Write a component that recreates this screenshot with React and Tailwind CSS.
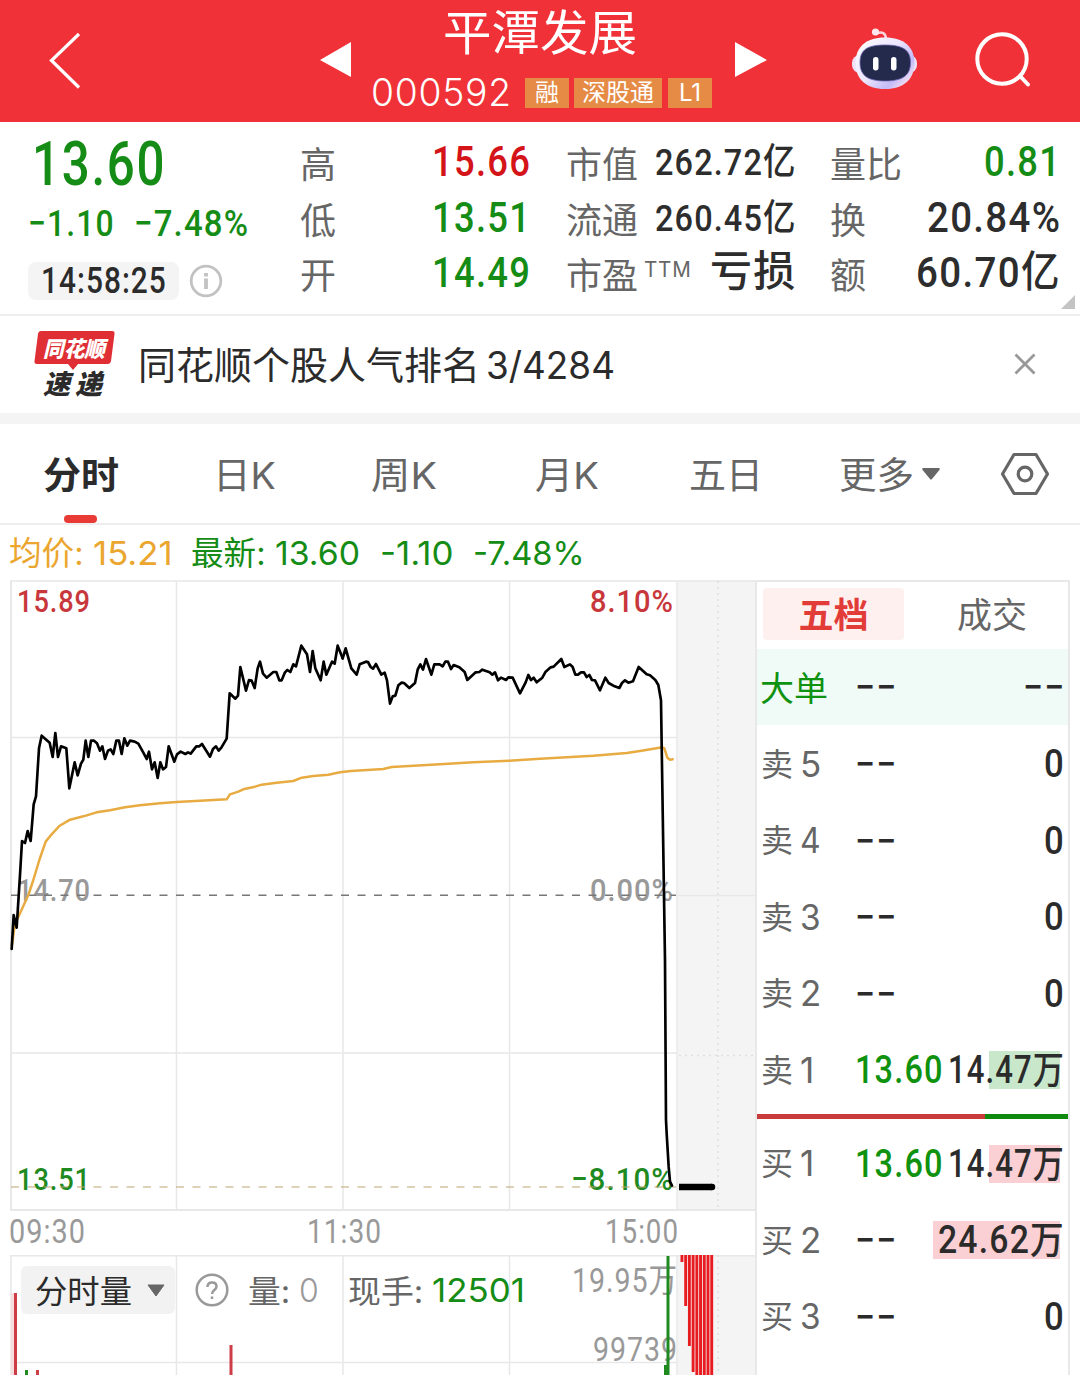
import { useLayoutEffect, useRef } from 'react';

// squeezes or stretches a text to the width of its box
const Fit = ({ className = '', children }) => {
  const box = useRef(null);
  const inner = useRef(null);

  useLayoutEffect(() => {
    const scale = box.current.clientWidth / inner.current.offsetWidth;
    inner.current.style.transform = `scaleX(${scale})`;
  }, [children]);

  return (
    <span ref={box} className={`block shrink-0 whitespace-nowrap ${className}`}>
      <span ref={inner} className="inline-block origin-left">{children}</span>
    </span>
  );
};

const NUM = "font-['Roboto','Noto_Sans_CJK_SC',sans-serif] font-medium tracking-[0.035em]";

const priceMorning =
  '35,1122 41,1020 50,1058 60,900 66,798 75,804 83,768 92,798 101,688 108,664 117,520 125,482 149,503 158,546 166,474 174,546 183,514 199,520 208,640 224,562 233,601 243,566 250,554 257,497 265,546 273,497 282,497 291,505 300,527 307,514 315,552 324,527 332,523 340,537 349,497 357,497 365,537 373,490 382,512 390,497 404,500 415,506 430,533 440,552 447,530 456,583 464,562 473,609 481,562 489,583 498,576 506,514 523,560 531,538 542,530 556,537 564,532 572,536 589,514 598,514 606,507 630,545 639,522 648,514 656,527 664,518 680,491 689,355 706,371 714,362 721,276 738,347 747,315 755,317 764,339 773,280 780,260 789,296 800,308 820,291 829,291 838,316 845,316 855,292 862,285 871,291 880,268 888,274 904,212 921,238 930,291 938,228 946,280 962,316 971,260 979,299 996,260 1004,266 1013,212 1028,250';
const priceAfternoon =
  '8,250 17,220 34,280 50,299 59,268 78,260 84,261 92,276 99,281 108,267 124,299 134,293 141,316 150,386 158,364 166,362 175,331 185,323 192,324 208,339 225,324 233,284 241,268 249,284 258,252 274,299 283,268 299,268 308,274 316,260 324,260 333,282 341,270 358,277 374,291 382,315 407,292 418,291 427,284 449,292 457,299 465,292 474,316 483,308 498,315 505,307 518,308 540,355 557,322 565,300 573,315 581,308 590,322 607,308 617,290 632,277 641,275 664,252 673,276 690,268 698,276 706,299 714,299 723,292 732,292 740,306 748,300 756,315 765,316 780,346 796,308 806,324 820,332 838,339 846,324 855,316 865,323 879,319 896,276 920,298 930,301 946,315 955,330 963,376 975,1155 978,1635 980,1675 986,1775 990,1820 996,1832';
const average =
  '36,1110 45,1045 60,1015 85,960 100,915 118,855 137,800 155,778 178,753 210,734 250,724 290,712 330,706 375,697 420,691 480,685 530,681 600,677 680,673 690,658 715,650 730,643 765,635 785,629 830,623 880,618 905,608 940,603 985,599 1020,592 1053,588 1150,582 1175,576 1320,568 1420,562 1528,557 1620,551 1780,542 1880,534 1920,528 1987,517 1993,520 2002,548 2010,554 2018,553';

const Header = () => (
  <header className="flex h-[122px] items-start bg-[#f03137] text-white">
    <svg className="h-[122px] w-[320px]" viewBox="0 0 320 122" fill="none" stroke="#fff" strokeWidth="3.2">
      <path d="M79 34 51.5 60.5 79 87.5" />
    </svg>
    <svg className="h-[122px] w-[32px]" viewBox="320 0 32 122" fill="#fff">
      <path d="M320 60 351 42V77Z" />
    </svg>
    <div className="w-[383px]">
      <div className="ml-[91px] flex h-[62px] pt-[2px]">
        <Fit className="w-[194px] text-[48px] leading-[62px]">平潭发展</Fit>
      </div>
      <div className="ml-[19px] flex h-[60px] pt-[8px]">
        <Fit className="w-[141px] text-[38px] leading-[44px] font-light tracking-[0.02em]">000592</Fit>
        <div className="ml-[13px] mt-[8px] flex h-[30px] text-[24px] leading-[30px]">
          <span className="w-[44px] bg-[#e58b46] text-center">融</span>
          <span className="ml-[5px] w-[88px] bg-[#e58b46] text-center">深股通</span>
          <span className="ml-[6px] w-[44px] bg-[#e58b46] text-center">L1</span>
        </div>
      </div>
    </div>
    <svg className="h-[122px] w-[33px]" viewBox="735 0 33 122" fill="#fff">
      <path d="M735 42 767 60 735 77Z" />
    </svg>
    <svg className="ml-[80px] h-[122px] w-[72px]" viewBox="848 0 72 122">
      <defs>
        <linearGradient id="shell" x1="0" y1="0" x2="1" y2="0.8">
          <stop offset="0" stopColor="#fff" />
          <stop offset="0.5" stopColor="#ece6ff" />
          <stop offset="0.8" stopColor="#c3bbf7" />
          <stop offset="1" stopColor="#fbe6f2" />
        </linearGradient>
      </defs>
      <path d="M877 33Q885.500 30.500 886 39" fill="none" stroke="#fbd5de" strokeWidth="2.600" />
      <circle cx="875.500" cy="32" r="3.600" fill="#ffe9ee" />
      <rect x="852" y="55" width="65" height="18" rx="8" fill="#eee2f8" />
      <path d="M885 37.500C904 37.500 914.500 47 914.500 63S904 89 885 89 855.500 79 855.500 63 866 37.500 885 37.500Z" fill="url(#shell)" />
      <path d="M885 45C903 45 910.500 50 910.500 62.500S903 81 885 81 860 75 860 62.500 867 45 885 45Z" fill="#232a4c" stroke="#6c66b0" strokeWidth="0.8" />
      <rect x="873" y="57" width="5.500" height="13.500" rx="2.700" fill="#fff" />
      <rect x="891" y="57" width="5.500" height="13.500" rx="2.700" fill="#fff" />
    </svg>
    <svg className="ml-[50px] h-[122px] w-[70px]" viewBox="970 0 70 122" fill="none" stroke="#fff" strokeWidth="4" strokeLinecap="round">
      <circle cx="1002" cy="59" r="24.700" />
      <path d="M1020 76 1028 84.500" />
    </svg>
  </header>
);

const Quote = () => (
  <section className="relative flex h-[194px] border-b-2 border-[#eee] text-[36px] text-[#666]">
    <div className="w-[301px] pl-[28px] text-[#158c15]">
      <Fit className={`ml-[4px] mt-[8px] h-[68px] w-[134px] text-[61px] leading-[68px] ${NUM}`}>13.60</Fit>
      <div className={`flex h-[50px] text-[37px] leading-[52px] ${NUM}`}>
        <Fit className="w-[87px]">−1.10</Fit>
        <Fit className="ml-[19px] w-[115px]">−7.48%</Fit>
      </div>
      <div className="mt-[14px] flex items-center">
        <span className="flex h-[38px] w-[151px] justify-center rounded-lg bg-[#f4f4f4] text-[#2b2b2b]">
          <Fit className={`w-[126px] text-[36px] leading-[38px] ${NUM}`}>14:58:25</Fit>
        </span>
        <svg className="ml-[10px] size-[34px]" viewBox="0 0 34 34" fill="none" stroke="#c2c2c2" strokeWidth="2.800">
          <circle cx="17" cy="17" r="14.800" />
          <path d="M17 14.500V25M17 9V12.500" strokeWidth="3.800" />
        </svg>
      </div>
    </div>
    <div className="mt-[16px] w-[34px] -ml-px leading-[55.500px]">
      <p>高</p>
      <p>低</p>
      <p>开</p>
    </div>
    <div className={`mt-[12px] ml-[98px] w-[99px] text-[43px] leading-[55.500px] text-[#158c15] ${NUM}`}>
      <Fit className="w-[99px] text-[#d41418]">15.66</Fit>
      <Fit className="w-[99px]">13.51</Fit>
      <Fit className="w-[99px]">14.49</Fit>
    </div>
    <div className="mt-[16px] ml-[35px] w-[88px] leading-[55.500px]">
      <p>市值</p>
      <p>流通</p>
      <p className="flex whitespace-nowrap">
        市盈
        <Fit className="ml-[6px] -mt-[7px] w-[48px] text-[21px] tracking-[0.04em]">TTM</Fit>
      </p>
    </div>
    <div className={`mt-[13px] flex w-[143px] flex-col items-end text-[37px] leading-[55.500px] text-[#2d2d2d] ${NUM}`}>
      <Fit className="w-[142px]">262.72亿</Fit>
      <Fit className="w-[142px]">260.45亿</Fit>
      <Fit className="-mt-[2px] w-[87px] text-[42px]">亏损</Fit>
    </div>
    <div className="mt-[16px] ml-[33px] w-[72px] leading-[55.500px]">
      <p>量比</p>
      <p>换</p>
      <p>额</p>
    </div>
    <div className={`mt-[12px] flex w-[159px] flex-col items-end text-[43px] leading-[55.500px] text-[#2d2d2d] ${NUM}`}>
      <Fit className="w-[77px] text-[#158c15]">0.81</Fit>
      <Fit className="w-[134px]">20.84%</Fit>
      <Fit className="w-[145px]">60.70亿</Fit>
    </div>
    <svg className="absolute right-[5px] bottom-[5px] size-[14px]" viewBox="0 0 14 14" fill="#c4c4c4">
      <path d="M14 0V14H0Z" />
    </svg>
  </section>
);

const News = () => (
  <section className="flex h-[108px] items-center border-b-[11px] border-[#f4f4f4] text-[#2b2b2b]">
    <div className="relative ml-[34px] h-[68px] w-[81px]">
      <svg className="absolute inset-0" width="81" height="68" viewBox="0 0 81 68" fill="#df2f35">
        <path d="M7 0H78Q81 0 80.500 3L77 30Q76.500 33 73.500 33H44L39 39 34 33H3Q0 33 .5 30L4 3Q4.500 0 7 0Z" />
      </svg>
      <div className="relative pl-[9px] font-black italic">
        <Fit className="h-[37px] w-[62px] text-[22px] leading-[36px] text-white">同花顺</Fit>
        <div className="flex h-[31px] gap-[5px] text-[27px] leading-[34px]">
          <Fit className="w-[27px]">速</Fit>
          <Fit className="w-[27px]">递</Fit>
        </div>
      </div>
    </div>
    <Fit className="ml-[23px] w-[342px] text-[38px] leading-[50px]">同花顺个股人气排名</Fit>
    <Fit className="ml-[6px] w-[129px] text-[38px] leading-[50px]">3/4284</Fit>
    <svg className="ml-[399px] -mt-[2px] size-[22px]" viewBox="0 0 22 22" stroke="#999" strokeWidth="2.800">
      <path d="M1.500 1.500 20.500 20.500M20.500 1.500 1.500 20.500" />
    </svg>
  </section>
);

const Tabs = () => (
  <nav className="flex h-[101px] border-b-2 border-[#eee] text-[37px] leading-[103px] text-[#666]">
    <div className="relative ml-[43px] w-[76px] font-bold text-[#2b2b2b]">
      <Fit className="w-[76px]">分时</Fit>
      <span className="absolute bottom-0 left-[21px] h-[8px] w-[33px] rounded-full bg-[#e93b35]" />
    </div>
    <Fit className="ml-[94px] w-[63px]">日K</Fit>
    <Fit className="ml-[95px] w-[66px]">周K</Fit>
    <Fit className="ml-[98px] w-[64px]">月K</Fit>
    <Fit className="ml-[90px] w-[74px]">五日</Fit>
    <Fit className="ml-[76px] w-[75px]">更多</Fit>
    <svg className="ml-[8px] h-[100px] w-[18px]" viewBox="0 0 18 100" fill="#666">
      <path d="M1 44H17Q18.500 44.500 17 46.500L10 55Q9 56 8 55L1 46.500Q-.5 44.500 1 44Z" />
    </svg>
    <svg className="ml-[60px] h-[100px] w-[50px]" viewBox="0 0 50 100" fill="none" stroke="#666" strokeWidth="3.200" strokeLinejoin="round">
      <path d="M14 30.500H36L47.500 50 36 69.500H14L2.500 50Z" />
      <circle cx="25" cy="50" r="6.800" />
    </svg>
  </nav>
);

const Legend = () => (
  <div className="flex h-[55px] pt-[1px] text-[33px] leading-[54px] text-[#158c15]">
    <Fit className="ml-[9px] w-[75px] text-[#eaa62e]">均价:</Fit>
    <Fit className="ml-[9px] w-[80px] text-[#eaa62e]">15.21</Fit>
    <Fit className="ml-[18px] w-[75px]">最新:</Fit>
    <Fit className="ml-[9px] w-[85px]">13.60</Fit>
    <Fit className="ml-[20px] w-[74px]">-1.10</Fit>
    <Fit className="ml-[19px] w-[112px]">-7.48%</Fit>
  </div>
);

const PriceChart = () => (
  <svg className="block" width="755" height="631" viewBox="0 580 755 631">
    <rect x="678" y="580" width="78" height="631" fill="#f4f4f4" />
    <g stroke="#e8e8e8" strokeWidth="1.500" fill="none">
      <path d="M10 581H756M10 737.500H677M10 1053H677M176.500 581V1210M343 581V1210M509.500 581V1210M677 581V1210M678 895.500H755" />
      <path d="M11 580V1210M10 1210H756" strokeWidth="2" />
      <path d="M718 581V1210M679 1055.500H755" stroke="#dedede" strokeDasharray="2 4" />
    </g>
    <g fontFamily="Roboto" fontWeight="500" fontSize="32" letterSpacing="1.1">
      <text x="17" y="612" textLength="74" lengthAdjust="spacingAndGlyphs" fill="#c8373b">15.89</text>
      <text x="590" y="612" textLength="84" lengthAdjust="spacingAndGlyphs" fill="#c8373b">8.10%</text>
      <text x="17" y="901" textLength="74" lengthAdjust="spacingAndGlyphs" fill="#999">14.70</text>
      <text x="590" y="901" textLength="84" lengthAdjust="spacingAndGlyphs" fill="#999">0.00%</text>
      <text x="17" y="1190" textLength="74" lengthAdjust="spacingAndGlyphs" fill="#1f8a1f">13.51</text>
      <text x="571" y="1190" textLength="103" lengthAdjust="spacingAndGlyphs" fill="#1f8a1f">−8.10%</text>
    </g>
    <path d="M11 895.300H676" stroke="#777" strokeWidth="1.400" strokeDasharray="8 8.500" />
    <path d="M11 1187H676" stroke="#bba573" strokeWidth="1.200" strokeDasharray="8 8.500" />
    <g transform="translate(0 575) scale(.33333)" fill="none" strokeLinejoin="round" strokeLinecap="round">
      <polyline points={average} stroke="#e8ab42" strokeWidth="7.500" />
      <polyline points={priceMorning} stroke="#000" strokeWidth="8" />
      <polyline points={priceAfternoon} stroke="#000" strokeWidth="8" transform="translate(1020 0)" />
    </g>
    <path d="M679 1187H712" stroke="#000" strokeWidth="6.500" />
    <circle cx="712" cy="1187" r="3.250" />
  </svg>
);

const VolumeChart = () => {
  const auction = [7, 51, 91, 117, 120, 120, 120, 120, 120];
  return (
    <svg className="absolute inset-0" width="755" height="120" viewBox="0 0 755 120">
      <rect x="678" y="0" width="78" height="120" fill="#f4f4f4" />
      <path
        d="M10 .7H756M11 0V120M176.500 0V120M343 0V120M509.500 0V120M677 0V120M10 107.500H677"
        stroke="#e8e8e8"
        strokeWidth="1.500"
      />
      <path d="M718 0V120" stroke="#dedede" strokeWidth="1.500" strokeDasharray="2 4" />
      <rect x="11" y="38" width="3" height="82" fill="#f8dcde" />
      <g fill="#cc3d45">
        <rect x="14" y="38" width="3" height="82" />
        <rect x="36" y="115" width="3" height="5" />
        <rect x="229.500" y="90" width="3" height="30" />
      </g>
      <rect x="25" y="115" width="3" height="5" fill="#1f8a1f" />
      <g fontFamily="Roboto, 'Noto Sans CJK SC'" fontSize="33" fill="#999" letterSpacing="1.1">
        <text x="572" y="37" textLength="106" lengthAdjust="spacingAndGlyphs">19.95万</text>
        <text x="593" y="106" textLength="85" lengthAdjust="spacingAndGlyphs">99739</text>
      </g>
      <rect x="666.500" y="1" width="3" height="119" fill="#1f8a1f" />
      <rect x="664" y="110" width="5" height="10" fill="#1f8a1f" />
      {auction.map((h, i) => (
        <rect key={i} x={680.5 + i * 3.72} y="0" width="2.900" height={h} fill="#e81c20" />
      ))}
    </svg>
  );
};

const Volume = () => (
  <div className="relative h-[120px] text-[32px] leading-[52px]">
    <VolumeChart />
    <div className="relative flex pt-[11px] text-[#666]">
      <div className="ml-[21px] flex h-[48px] w-[154px] rounded-md bg-[#f2f2f2] text-[#2b2b2b]">
        <Fit className="ml-[14px] w-[97px]">分时量</Fit>
        <svg className="mt-[15px] ml-[15px] size-[18px]" viewBox="0 0 18 18" fill="#666">
          <path d="M1 4H17L9 15Z" stroke="#666" strokeLinejoin="round" />
        </svg>
      </div>
      <svg className="ml-[20px] h-[48px] w-[34px]" viewBox="0 0 34 48" fill="none" stroke="#999" strokeWidth="2.500">
        <circle cx="17" cy="24" r="15.300" />
        <path d="M12.500 21Q12.500 16.500 17 16.500T21.500 20.500C21.500 24 17 24 17 28M17 30.500V33" />
      </svg>
      <Fit className="ml-[19px] w-[42px]">量:</Fit>
      <Fit className="ml-[9px] w-[20px] font-light leading-[49px] text-[#999]">0</Fit>
      <Fit className="ml-[29px] w-[75px]">现手:</Fit>
      <Fit className="ml-[9px] w-[93px] text-[33px] leading-[49px] text-[#158c15]">12501</Fit>
    </div>
  </div>
);

const Dashes = () => (
  <Fit className={`w-[42px] text-[38px] text-[#2b2b2b] ${NUM}`}>−−</Fit>
);

const Bar = ({ label, level, price, volume, mark, volumeWidth = 'w-[21px]' }) => (
  <div className="flex h-[76.500px] items-center">
    <div className="flex w-[98px] pl-[4px] text-[32px] text-[#666]">
      <span className="mt-px">{label}</span>
      <Fit className={`ml-[7px] text-[35px] ${level === '1' ? 'w-[14px]' : 'w-[21px]'}`}>{level}</Fit>
    </div>
    {price ? (
      <Fit className={`w-[89px] text-[38px] text-[#0f920f] ${NUM}`}>{price}</Fit>
    ) : (
      <Dashes />
    )}
    <div className="relative ml-auto pr-[3px]">
      {mark && <span className={`absolute top-1/2 right-[8px] h-[38px] -translate-y-1/2 ${mark}`} />}
      <Fit className={`relative text-[38px] text-[#2b2b2b] ${volumeWidth} ${NUM}`}>{volume}</Fit>
    </div>
  </div>
);

const OrderBook = () => (
  <aside className="h-[795px] w-[315px] border-x-2 border-t-2 border-[#e8e8e8] bg-white leading-[50px]">
    <div className="flex h-[67px] pt-[6px] text-[35px] leading-[55px]">
      <span className="ml-[6px] h-[52px] w-[141px] rounded bg-[#fff0f0] text-center font-bold text-[#e23c38]">五档</span>
      <span className="ml-[53px] text-[#666]">成交</span>
    </div>
    <div className="mb-px flex h-[76px] items-center bg-[#f0faf6] text-[34px] text-[#0f920f]">
      <span className="mt-[3px] ml-[3px] w-[95px]">大单</span>
      <Dashes />
      <span className="mr-[3px] ml-auto">
        <Dashes />
      </span>
    </div>
    <Bar label="卖" level="5" volume="0" />
    <Bar label="卖" level="4" volume="0" />
    <Bar label="卖" level="3" volume="0" />
    <Bar label="卖" level="2" volume="0" />
    <Bar label="卖" level="1" price="13.60" volume="14.47万" volumeWidth="w-[117px]" mark="w-[71px] bg-[#c9e8cb]" />
    <div className="mt-[5px] mb-[7px] flex h-[5px]">
      <span className="w-[228px] bg-[#c93a3a]" />
      <span className="grow bg-[#0f8a0f]" />
    </div>
    <Bar label="买" level="1" price="13.60" volume="14.47万" volumeWidth="w-[117px]" mark="w-[71px] bg-[#fbd0d4]" />
    <Bar label="买" level="2" volume="24.62万" volumeWidth="w-[127px]" mark="w-[127px] bg-[#fbd0d4]" />
    <Bar label="买" level="3" volume="0" />
  </aside>
);

const App = () => {
  return (
    <div className="h-[1375px] w-[1080px] overflow-hidden bg-white font-['Inter','Noto_Sans_CJK_SC',sans-serif]">
      <Header />
      <Quote />
      <News />
      <Tabs />
      <Legend />
      <div className="flex">
        <div className="w-[755px]">
          <PriceChart />
          <div className="flex h-[44px] text-[33px] leading-[42px] tracking-[0.035em] text-[#999] font-['Roboto',sans-serif]">
            <Fit className="ml-[9px] w-[77px]">09:30</Fit>
            <Fit className="ml-[221px] w-[75px]">11:30</Fit>
            <Fit className="ml-[223px] w-[74px]">15:00</Fit>
          </div>
          <Volume />
        </div>
        <OrderBook />
      </div>
    </div>
  );
};

export default App;
